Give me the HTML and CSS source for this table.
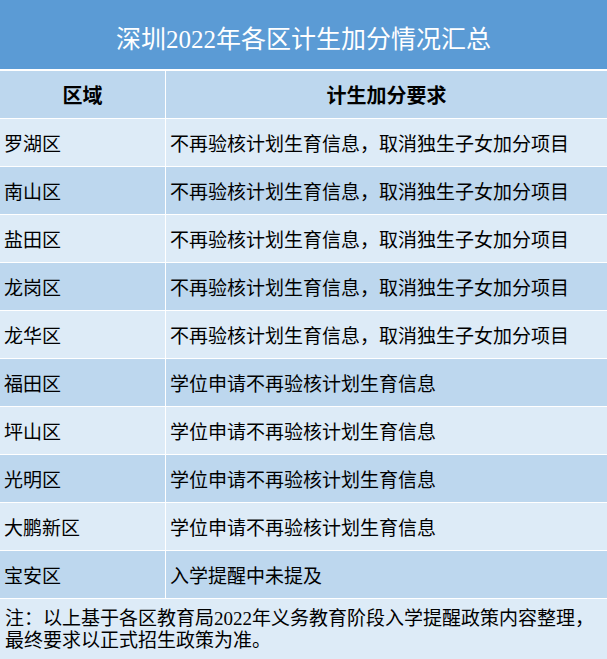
FILE: index.html
```html
<!DOCTYPE html>
<html lang="zh-CN">
<head>
<meta charset="utf-8">
<title>深圳2022年各区计生加分情况汇总</title>
<link rel="stylesheet" href="styles.css">
</head>
<body>
<div class="sheet">
  <div class="title">深圳2022年各区计生加分情况汇总</div>
  <div class="grid">
    <div class="cell head">区域</div>
    <div class="cell head">计生加分要求</div>

    <div class="cell light">罗湖区</div>
    <div class="cell light">不再验核计划生育信息，取消独生子女加分项目</div>

    <div class="cell dark">南山区</div>
    <div class="cell dark">不再验核计划生育信息，取消独生子女加分项目</div>

    <div class="cell light">盐田区</div>
    <div class="cell light">不再验核计划生育信息，取消独生子女加分项目</div>

    <div class="cell dark">龙岗区</div>
    <div class="cell dark">不再验核计划生育信息，取消独生子女加分项目</div>

    <div class="cell light">龙华区</div>
    <div class="cell light">不再验核计划生育信息，取消独生子女加分项目</div>

    <div class="cell dark">福田区</div>
    <div class="cell dark">学位申请不再验核计划生育信息</div>

    <div class="cell light">坪山区</div>
    <div class="cell light">学位申请不再验核计划生育信息</div>

    <div class="cell dark">光明区</div>
    <div class="cell dark">学位申请不再验核计划生育信息</div>

    <div class="cell light">大鹏新区</div>
    <div class="cell light">学位申请不再验核计划生育信息</div>

    <div class="cell dark">宝安区</div>
    <div class="cell dark">入学提醒中未提及</div>

    <div class="note">注：以上基于各区教育局2022年义务教育阶段入学提醒政策内容整理，<br>最终要求以正式招生政策为准。</div>
  </div>
</div>
</body>
</html>
```
FILE: styles.css
```css
html, body {
  margin: 0;
  padding: 0;
  background: #ffffff;
}

body {
  font-family: "Liberation Serif", "Noto Sans CJK SC", serif;
  color: #000000;
  width: 607px;
  height: 659px;
  overflow: hidden;
}

.sheet {
  display: flex;
  flex-direction: column;
  gap: 2px;
  width: 607px;
}

.title {
  height: 69px;
  background: #5b9bd5;
  color: #ffffff;
  font-size: 25px;
  display: flex;
  align-items: center;
  justify-content: center;
  padding-top: 4px;
  box-sizing: border-box;
}

.grid {
  display: grid;
  grid-template-columns: 165px 1fr;
  grid-auto-rows: 47px;
  column-gap: 1px;
  row-gap: 1px;
}

.cell {
  display: flex;
  align-items: center;
  padding: 0 4px;
  font-size: 19px;
  white-space: nowrap;
}

.head {
  background: #bdd7ee;
  font-weight: bold;
  font-size: 20px;
  justify-content: center;
}

.light {
  background: #ddebf7;
}

.dark {
  background: #bdd7ee;
}

.note {
  grid-column: 1 / 3;
  height: 60px;
  background: #ddebf7;
  font-size: 19px;
  line-height: 22px;
  padding: 9px 5px 0;
  box-sizing: border-box;
  white-space: nowrap;
}
```
